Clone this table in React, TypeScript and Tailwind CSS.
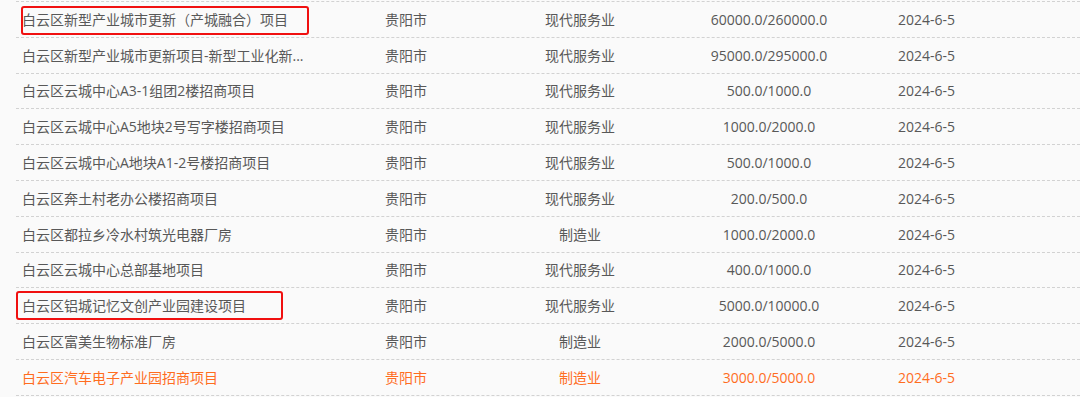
const rows = [
  { name: "白云区新型产业城市更新（产城融合）项目", city: "贵阳市", industry: "现代服务业", amount: "60000.0/260000.0", date: "2024-6-5", mark: "a" },
  { name: "白云区新型产业城市更新项目-新型工业化新...", city: "贵阳市", industry: "现代服务业", amount: "95000.0/295000.0", date: "2024-6-5" },
  { name: "白云区云城中心A3-1组团2楼招商项目", city: "贵阳市", industry: "现代服务业", amount: "500.0/1000.0", date: "2024-6-5" },
  { name: "白云区云城中心A5地块2号写字楼招商项目", city: "贵阳市", industry: "现代服务业", amount: "1000.0/2000.0", date: "2024-6-5" },
  { name: "白云区云城中心A地块A1-2号楼招商项目", city: "贵阳市", industry: "现代服务业", amount: "500.0/1000.0", date: "2024-6-5" },
  { name: "白云区奔土村老办公楼招商项目", city: "贵阳市", industry: "现代服务业", amount: "200.0/500.0", date: "2024-6-5" },
  { name: "白云区都拉乡冷水村筑光电器厂房", city: "贵阳市", industry: "制造业", amount: "1000.0/2000.0", date: "2024-6-5" },
  { name: "白云区云城中心总部基地项目", city: "贵阳市", industry: "现代服务业", amount: "400.0/1000.0", date: "2024-6-5" },
  { name: "白云区铝城记忆文创产业园建设项目", city: "贵阳市", industry: "现代服务业", amount: "5000.0/10000.0", date: "2024-6-5", mark: "b" },
  { name: "白云区富美生物标准厂房", city: "贵阳市", industry: "制造业", amount: "2000.0/5000.0", date: "2024-6-5" },
  { name: "白云区汽车电子产业园招商项目", city: "贵阳市", industry: "制造业", amount: "3000.0/5000.0", date: "2024-6-5", hot: true },
];

export default function App() {
  return (
    <div
      className="h-[397px] w-[1080px] overflow-hidden bg-[#fafafa] pl-4 pt-px text-[14px]"
      style={{ fontFamily: '"Open Sans", "Noto Sans CJK SC", sans-serif' }}
    >
      <div className="border-t border-dashed border-[#d2d2d2]">
        {rows.map((r, i) => (
          <div
            key={i}
            className={`grid h-[35.8px] grid-cols-[363px_130px_142px_236px_1fr] items-center border-b border-dashed border-[#d2d2d2] ${
              r.hot ? "text-[#ff6d1f]" : "text-[#585858]"
            }`}
          >
            <div className="relative flex h-full items-center whitespace-nowrap pl-[6px]">
              {r.name}
              {r.mark === "a" && (
                <span className="absolute left-[5px] top-[4px] h-[29px] w-[288px] rounded-[3px] border-2 border-[#f01010]" />
              )}
              {r.mark === "b" && (
                <span className="absolute left-0 top-[3px] h-[29px] w-[267px] rounded-[3px] border-2 border-[#f01010]" />
              )}
            </div>
            <div className="pl-[6px]">{r.city}</div>
            <div className="text-center">{r.industry}</div>
            <div className="text-center">{r.amount}</div>
            <div className="pl-[11px]">{r.date}</div>
          </div>
        ))}
      </div>
    </div>
  );
}
